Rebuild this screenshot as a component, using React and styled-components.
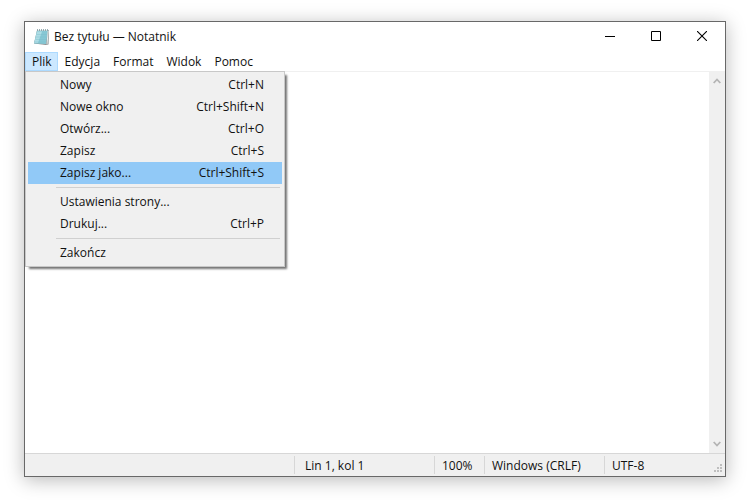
import React from "react";
import styled, { createGlobalStyle } from "styled-components";

const GlobalStyle = createGlobalStyle`
  *, *::before, *::after { box-sizing: border-box; }
  body { margin: 0; background: #fff; }
  body, button, textarea {
    font-family: "Open Sans", "Noto Sans", sans-serif;
    font-size: 12px;
    line-height: 16px;
    color: #111;
  }
  button { margin: 0; padding: 0; border: 0; background: transparent; }
`;

const Desktop = styled.div`
  display: flex;
  min-height: 100vh;
  padding: 21px 24px 23px;
`;

const Window = styled.main`
  flex: 1;
  display: flex;
  flex-direction: column;
  min-width: 0;
  background: #fff;
  border: 1px solid #686868;
  box-shadow: 0 3px 18px rgba(0, 0, 0, 0.28);
`;

const TitleBar = styled.header`
  display: flex;
  align-items: center;
  height: 30px;
  padding-left: 8px;
`;

const Title = styled.h1`
  flex: 1;
  margin: 0 0 0 4px;
  font-size: 12px;
  font-weight: 400;
`;

const CaptionButton = styled.button`
  display: flex;
  align-items: center;
  justify-content: center;
  align-self: flex-start;
  width: 46px;
  height: 28px;
`;

const MenuBar = styled.nav`
  display: flex;
  height: 19px;
`;

const MenuEntry = styled.div`
  position: relative;
  display: flex;
`;

const MenuButton = styled.button`
  padding: 1px 6px 0 7px;
  background: ${(p) => (p.$open ? "#cce8ff" : "transparent")};
  box-shadow: ${(p) => (p.$open ? "inset 0 0 0 1px #addaff" : "none")};
`;

const Dropdown = styled.div`
  position: absolute;
  z-index: 1;
  top: 100%;
  left: 0;
  width: 260px;
  padding: 2px;
  background: #f0f0f0;
  border: 1px solid #c8c8c8;
  box-shadow: 3px 3px 2px -1px rgba(0, 0, 0, 0.55);
`;

const MenuItem = styled.button`
  display: flex;
  align-items: center;
  justify-content: space-between;
  width: 100%;
  height: 22px;
  padding: 0 18px 0 32px;
  background: ${(p) => (p.$active ? "#91c9f7" : "transparent")};
`;

const Separator = styled.hr`
  height: 1px;
  margin: 3px 2px 3px 28px;
  border: 0;
  background: #d0d0d0;
`;

const Body = styled.section`
  flex: 1;
  display: flex;
  border-top: 1px solid #f0f0f0;
`;

const Editor = styled.textarea`
  flex: 1;
  min-width: 0;
  padding: 2px 4px;
  border: 0;
  outline: 0;
  resize: none;
  background: #fff;
`;

const ScrollBar = styled.div`
  display: flex;
  flex-direction: column;
  justify-content: space-between;
  width: 16px;
  background: #f0f0f0;
`;

const ScrollButton = styled.button`
  display: flex;
  align-items: center;
  justify-content: center;
  width: 16px;
  height: 18px;
`;

const StatusBar = styled.footer`
  display: flex;
  justify-content: flex-end;
  height: 23px;
  background: #f0f0f0;
  border-top: 1px solid #d7d7d7;
`;

const StatusCell = styled.div`
  display: flex;
  align-items: center;
  width: ${(p) => p.$width}px;
  margin: 2px 0;
  padding-top: 2px;
  padding-left: ${(p) => p.$indent}px;
  border-left: 1px solid #d7d7d7;
`;

const Grip = styled.svg`
  align-self: flex-end;
  margin: 0 0 0 auto;
`;

const NotepadIcon = () => (
  <svg width="17" height="18" viewBox="0 0 17 18" aria-hidden="true">
    <path d="M4 2.5 16 2 15.5 16.5 13 17 1 15.5Z" fill="#8a8f90" />
    <path d="M4 2.5 15 2.5 13 16 1 15.5Z" fill="#86c7d4" />
    <path d="M4 3.5 9 3.5 5 15 1.4 15Z" fill="#aedde5" />
    <path d="M3.5 6.5H14M3 9H13.7M2.5 11.5H13.4M2 14H13" stroke="#7cbccb" strokeWidth=".4" />
    <path d="M4 2.5H15.5" stroke="#c9dde0" strokeWidth="1" />
    <path d="M4.5 1v2M6.5 1v2M8.5 1v2M10.5 1v2M12.5 1v2M14.5 1v2" stroke="#7f999f" strokeWidth=".8" />
    <path d="M15.2 3 14 16.3" stroke="#e9eeee" strokeWidth="1" />
  </svg>
);

const fileMenu = [
  { label: "Nowy", keys: "Ctrl+N" },
  { label: "Nowe okno", keys: "Ctrl+Shift+N" },
  { label: "Otwórz...", keys: "Ctrl+O" },
  { label: "Zapisz", keys: "Ctrl+S" },
  { label: "Zapisz jako...", keys: "Ctrl+Shift+S", active: true },
  null,
  { label: "Ustawienia strony..." },
  { label: "Drukuj...", keys: "Ctrl+P" },
  null,
  { label: "Zakończ" },
];

const menus = ["Edycja", "Format", "Widok", "Pomoc"];

export default function App() {
  return (
    <>
      <GlobalStyle />
      <Desktop>
        <Window>
          <TitleBar>
            <NotepadIcon />
            <Title>Bez tytułu — Notatnik</Title>
            <CaptionButton aria-label="Minimalizuj">
              <svg width="10" height="10" viewBox="0 0 10 10"><path d="M0 5.5H10" stroke="#000" /></svg>
            </CaptionButton>
            <CaptionButton aria-label="Maksymalizuj">
              <svg width="10" height="10" viewBox="0 0 10 10"><path d="M.5.5H9.5V9.5H.5Z" fill="none" stroke="#000" /></svg>
            </CaptionButton>
            <CaptionButton aria-label="Zamknij">
              <svg width="10" height="10" viewBox="0 0 10 10"><path d="M0 0 10 10M10 0 0 10" stroke="#000" strokeWidth="1.1" /></svg>
            </CaptionButton>
          </TitleBar>
          <MenuBar>
            <MenuEntry>
              <MenuButton $open aria-haspopup="menu" aria-expanded="true">Plik</MenuButton>
              <Dropdown role="menu">
                {fileMenu.map((item, i) =>
                  item ? (
                    <MenuItem key={i} role="menuitem" $active={item.active}>
                      <span>{item.label}</span>
                      {item.keys && <span>{item.keys}</span>}
                    </MenuItem>
                  ) : (
                    <Separator key={i} />
                  )
                )}
              </Dropdown>
            </MenuEntry>
            {menus.map((name) => (
              <MenuEntry key={name}>
                <MenuButton aria-haspopup="menu">{name}</MenuButton>
              </MenuEntry>
            ))}
          </MenuBar>
          <Body>
            <Editor aria-label="Treść dokumentu" />
            <ScrollBar>
              <ScrollButton aria-label="Przewiń w górę">
                <svg width="8" height="6" viewBox="0 0 8 6"><path d="M.7 5 4 1.5 7.3 5" fill="none" stroke="#b4b4b4" strokeWidth="1.8" /></svg>
              </ScrollButton>
              <ScrollButton aria-label="Przewiń w dół">
                <svg width="8" height="6" viewBox="0 0 8 6"><path d="M.7 1 4 4.5 7.3 1" fill="none" stroke="#b4b4b4" strokeWidth="1.8" /></svg>
              </ScrollButton>
            </ScrollBar>
          </Body>
          <StatusBar>
            <StatusCell $width={140} $indent={10}>Lin 1, kol 1</StatusCell>
            <StatusCell $width={50} $indent={7}>100%</StatusCell>
            <StatusCell $width={120} $indent={7}>Windows (CRLF)</StatusCell>
            <StatusCell $width={121} $indent={7}>
              UTF-8
              <Grip width="11" height="10" viewBox="0 0 11 10" aria-hidden="true">
                <path d="M6 0h2v2h-2zM3 3h2v2h-2zM6 3h2v2h-2zM0 6h2v2h-2zM3 6h2v2h-2zM6 6h2v2h-2z" fill="#bfbfbf" />
              </Grip>
            </StatusCell>
          </StatusBar>
        </Window>
      </Desktop>
    </>
  );
}
